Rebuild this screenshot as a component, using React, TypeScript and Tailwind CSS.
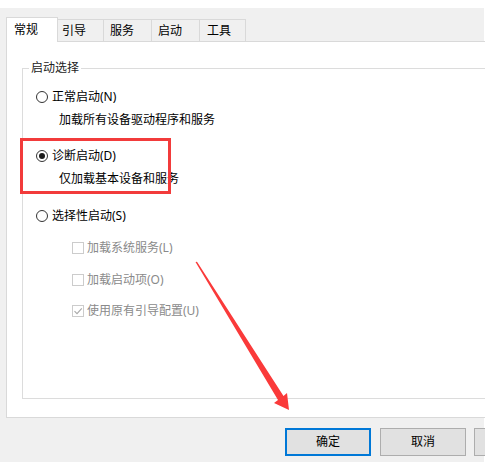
import React from 'react';

const tabs = [
  { label: '常规', w: 'w-[52px]', pl: 'pl-[7px]', active: true },
  { label: '引导', w: 'w-[46px]', pl: 'pl-[4px]' },
  { label: '服务', w: 'w-[48px]', pl: 'pl-[6px]' },
  { label: '启动', w: 'w-[48px]', pl: 'pl-[6px]' },
  { label: '工具', w: 'w-[46px]', pl: 'pl-[7px]' },
];

function Radio({ checked, label }: { checked?: boolean; label: string }) {
  return (
    <div className="flex h-[20px] items-center pl-[13px]">
      <span className="flex h-[12px] w-[12px] items-center justify-center rounded-full border border-[#333] bg-white">
        {checked && <span className="h-[6px] w-[6px] rounded-full bg-[#1a1a1a]" />}
      </span>
      <span className="ml-[4px] text-black">{label}</span>
    </div>
  );
}

function Desc({ text }: { text: string }) {
  return <div className="mt-[3px] flex h-[20px] items-center pl-[36px] text-black">{text}</div>;
}

function Check({ checked, label, className }: { checked?: boolean; label: string; className?: string }) {
  return (
    <div className={`flex h-[20px] items-center pl-[49px] ${className ?? ''}`}>
      <span className="flex h-[12px] w-[12px] items-center justify-center border border-[#cccccc] bg-white">
        {checked && (
          <svg width="10" height="10" viewBox="0 0 10 10" fill="none">
            <path d="M1.5 5.2 L4 7.6 L8.8 2.4" stroke="#a8a8a8" strokeWidth="1.1" />
          </svg>
        )}
      </span>
      <span className="ml-[3px] text-[#8a8a8a]">{label}</span>
    </div>
  );
}

export default function App() {
  return (
    <div
      className="relative h-[462px] w-[485px] overflow-hidden bg-white text-[12px] leading-[16px]"
      style={{ fontFamily: '"Noto Sans", "Noto Sans CJK SC", sans-serif' }}
    >
      <div className="h-[8px]" />
      <div className="flex h-[454px] w-[484px] flex-col bg-[#f0f0f0]">
        {/* Tabs */}
        <div className="flex items-end pl-[6px] pt-[9px]">
          {tabs.map((t) =>
            t.active ? (
              <div
                key={t.label}
                className={`relative z-10 -mb-px flex h-[25px] items-center border-x border-t border-[#d9d9d9] bg-white pb-[1px] ${t.w} ${t.pl}`}
              >
                {t.label}
              </div>
            ) : (
              <div
                key={t.label}
                className={`flex h-[22px] items-center border-r border-t border-[#d9d9d9] bg-[#f0f0f0] pt-[1px] ${t.w} ${t.pl}`}
              >
                {t.label}
              </div>
            )
          )}
        </div>

        {/* Panel */}
        <div className="ml-[6px] h-[377px] w-[500px] shrink-0 border-b border-l border-t border-[#d9d9d9] bg-white pl-[15px] pt-[18px]">
          <fieldset className="h-[339px] w-[490px] border-b border-l border-t border-[#dcdcdc]">
            <legend className="ml-[6px] px-[2px] leading-[16px] text-[#222]">启动选择</legend>
            <div className="mt-[11px]">
              <Radio label="正常启动(N)" />
              <Desc text="加载所有设备驱动程序和服务" />
              <div className="mt-[16px]">
                <Radio checked label="诊断启动(D)" />
              </div>
              <Desc text="仅加载基本设备和服务" />
              <div className="mt-[17px]">
                <Radio label="选择性启动(S)" />
              </div>
              <Check label="加载系统服务(L)" className="mt-[12px]" />
              <Check label="加载启动项(O)" className="mt-[12px]" />
              <Check checked label="使用原有引导配置(U)" className="mt-[11px]" />
            </div>
          </fieldset>
        </div>

        {/* Buttons */}
        <div className="mt-[10px] flex pl-[285px]">
          <button className="h-[28px] w-[86px] shrink-0 border-2 border-[#0078d7] bg-[#e1e1e1] text-black">确定</button>
          <button className="ml-[9px] h-[28px] w-[86px] shrink-0 border border-[#adadad] bg-[#e1e1e1] text-black">取消</button>
          <button className="ml-[8px] h-[28px] w-[86px] shrink-0 border border-[#adadad] bg-[#e1e1e1]" />
        </div>
      </div>

      {/* Annotation: red box */}
      <div className="pointer-events-none absolute left-[20px] top-[138px] h-[56px] w-[151px] border-[3px] border-[#f23b3b]" />

      {/* Annotation: red arrow */}
      <svg className="pointer-events-none absolute left-0 top-0" width="485" height="462" viewBox="0 0 485 462">
        <polygon
          points="195.5,262 197,261.8 283.5,396 287,393 289,410 274,403 278,400"
          fill="#fa3a3a"
        />
      </svg>
    </div>
  );
}
